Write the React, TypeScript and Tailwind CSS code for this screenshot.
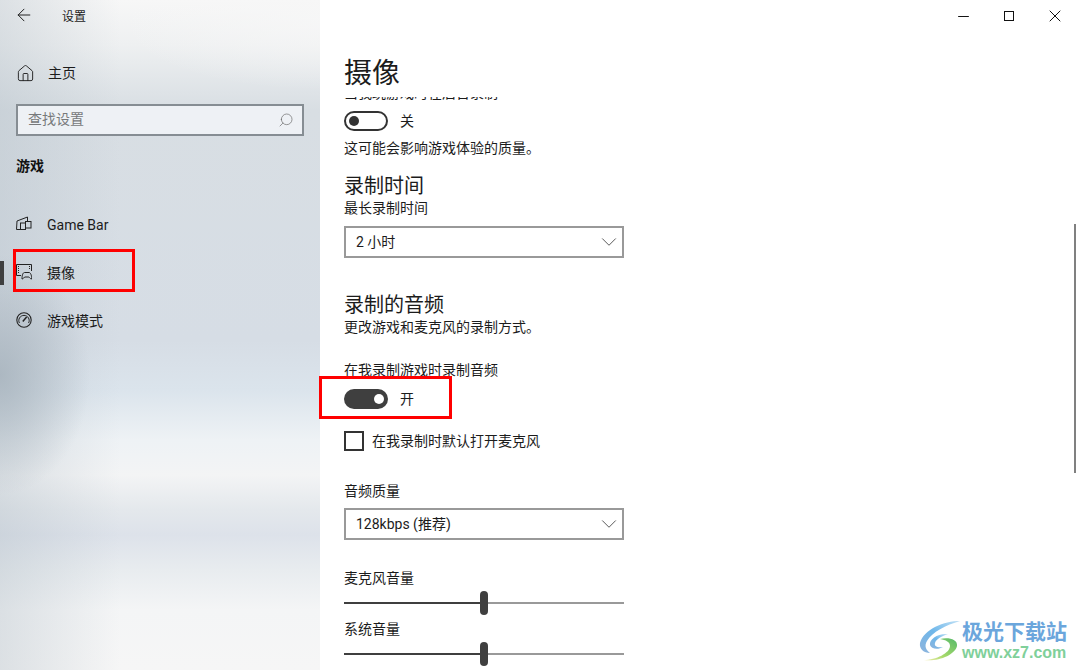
import { ArrowLeft, ChevronDown, Home, Minus, Search, X } from "lucide-react";

const font = "font-['Roboto','Noto_Sans_CJK_SC',sans-serif]";

function GameBarIcon() {
  return (
    <svg width="16" height="16" viewBox="0 0 16 16" fill="none" stroke="#222" strokeWidth="1">
      <path d="M4 13.5 H.5 L1 5 L11.5 1 V5" />
      <rect x="4.5" y="7" width="5" height="6.5" />
      <rect x="9.5" y="5.5" width="5.5" height="6.5" />
    </svg>
  );
}

function CaptureIcon() {
  return (
    <svg width="16" height="17" viewBox="0 0 16 17" fill="none" stroke="#222" strokeWidth="1">
      <path d="M5 12.5 H.5 V1.5 H15.5 V8" />
      <path d="M2.5 3 V11 M13.5 3 V7" strokeDasharray="1 1" />
      <path d="M6 16 C6 12 7 9.5 8.5 9.5 H13 C14.5 9.5 15.7 12 15.7 16 C14 16 13.5 14 12.5 14 H9 C8 14 7.5 16 6 16 Z" />
    </svg>
  );
}

function GameModeIcon() {
  return (
    <svg width="16" height="16" viewBox="0 0 16 16" fill="none" stroke="#222">
      <circle cx="8" cy="8" r="7.2" strokeWidth="1.1" />
      <path d="M3.4 11 A5.2 5.2 0 1 1 12.6 11" strokeWidth="1" />
      <path d="M6.8 9.6 L10.6 5" strokeWidth="1.5" />
    </svg>
  );
}

function NavItem({ icon, label, active }: { icon: React.ReactNode; label: string; active?: boolean }) {
  return (
    <div className="relative flex h-12 items-center pl-4">
      {active && <div className="absolute left-0 top-3 h-6 w-1 bg-[#3f3f3f]" />}
      <span className="mb-[3px] flex w-[31px] shrink-0">{icon}</span>
      <span className="text-sm text-[#1c1c1c]">{label}</span>
    </div>
  );
}

function Select({ value }: { value: string }) {
  return (
    <div className="flex h-8 w-[280px] items-center justify-between border-2 border-[#999] pl-2.5 text-sm text-[#1c1c1c]">
      <span>{value}</span>
      <ChevronDown size={26} strokeWidth={0.9} color="#555" />
    </div>
  );
}

function Slider() {
  return (
    <div className="relative flex h-6 w-[280px] items-center">
      <div className="h-0.5 w-[140px] bg-[#3f3f3f]" />
      <div className="h-0.5 flex-1 bg-[#999]" />
      <div className="absolute left-[136px] top-0 h-6 w-2 rounded-full bg-[#3f3f3f]" />
    </div>
  );
}

function Logo() {
  return (
    <div className="absolute bottom-px right-0 flex h-[56px] w-[162px] items-center">
      <svg width="46" height="48" viewBox="0 0 46 48" fill="none" className="shrink-0">
        <defs>
          <linearGradient id="swirlBlue" x1="1" y1="0" x2="0" y2="1">
            <stop offset="0" stopColor="#bfe0f5" />
            <stop offset="0.5" stopColor="#6fb7ea" />
            <stop offset="1" stopColor="#8fb4dc" />
          </linearGradient>
          <linearGradient id="swirlGreen" x1="1" y1="0" x2="0" y2="1">
            <stop offset="0" stopColor="#55b96a" />
            <stop offset="0.6" stopColor="#a5d96a" />
            <stop offset="1" stopColor="#f3ecaa" />
          </linearGradient>
        </defs>
        <path d="M44 4 C28 4 8 12 4 26 C3 32 8 36 14 36 C10 33 8 29 11 24 C16 15 30 8 44 4Z" fill="url(#swirlBlue)" />
        <path d="M32 17 C22 16 13 22 14 28 C15 32 22 33 27 30 C21 31 18 29 19 26 C20 22 26 19 32 17Z" fill="url(#swirlBlue)" />
        <path d="M24 22 C32 20 42 22 41 29 C39 38 22 45 8 43 C20 43 34 36 34 29 C34 25 30 23 24 22Z" fill="url(#swirlGreen)" />
      </svg>
      <div className="flex flex-col">
        <span className="text-[21px] leading-[24px] font-bold text-[#6ba6dc]">极光下载站</span>
        <span className="font-['Liberation_Sans',sans-serif] text-[16px] leading-[18px] font-bold text-[#7fd09a]">www.xz7.com</span>
      </div>
    </div>
  );
}

export default function App() {
  return (
    <div className={`relative flex h-[670px] w-[1078px] overflow-hidden bg-white ${font}`}>
      <aside className="h-full w-[320px] shrink-0 bg-[radial-gradient(ellipse_200px_70px_at_320px_20px,#f7f7f7cc,#f7f7f700),radial-gradient(ellipse_90px_120px_at_0px_375px,#a5b1bbcc,#a5b1bb00),linear-gradient(90deg,#b4bfc866_0px,#b4bfc800_120px),linear-gradient(180deg,#f7f7f7_0px,#eef0f1_45px,#d8dee3_110px,#d6dde5_340px,#dbe4ec_390px,#eef2f5_440px,#f3f4f5_475px,#e4e8ec_510px,#dde2ea_535px,#e8ecef_570px,#f4f5f6_610px,#f6f6f6_670px)]">
        <div className="flex h-[34px] items-center pl-3.5">
          <ArrowLeft size={20} strokeWidth={1.2} color="#222" className="mb-1" />
          <span className="ml-[28px] text-xs text-[#1c1c1c]">设置</span>
        </div>
        <div className="mt-[15px] flex h-12 items-center pl-4">
          <Home size={19} strokeWidth={1.2} color="#222" />
          <span className="ml-[13px] text-sm text-[#1c1c1c]">主页</span>
        </div>
        <div className="mx-4 mt-[7px] flex h-8 items-center justify-between border-2 border-[#868d93] bg-[#eef1f5] pl-2.5 pr-2">
          <span className="pb-0.5 text-sm text-[#77797b]">查找设置</span>
          <Search size={16} strokeWidth={1} color="#666" className="-scale-x-100" />
        </div>
        <div className="mt-[20px] pl-4 text-sm font-bold text-[#111]">游戏</div>
        <div className="mt-[25px]">
          <NavItem icon={<GameBarIcon />} label="Game Bar" />
          <NavItem icon={<CaptureIcon />} label="摄像" active />
          <NavItem icon={<GameModeIcon />} label="游戏模式" />
        </div>
      </aside>

      <main className="flex h-full flex-1 flex-col overflow-hidden text-[#1c1c1c]">
        <header className="flex h-[37px] shrink-0 justify-end">
          <div className="flex h-[32px] items-center text-[#111]">
            <span className="flex w-[46px] justify-center"><Minus size={17} strokeWidth={1.4} /></span>
            <span className="flex w-[46px] justify-center"><span className="h-2.5 w-2.5 border border-[#111]" /></span>
            <span className="flex w-[46px] justify-center"><X size={20} strokeWidth={1.2} /></span>
          </div>
        </header>
        <div className="flex h-[60px] shrink-0 items-start pl-6 text-[28px] leading-[73px]">摄像</div>
        <div className="relative flex-1 overflow-hidden pl-6">
          <div className="-mt-[14px] flex flex-col items-start text-sm">
            <p className="leading-5">当我玩游戏时在后台录制</p>
            <div className="mt-[6px] flex h-6 items-center gap-3">
              <div className="flex h-5 w-11 items-center rounded-full border-2 border-[#333] pl-[3px]">
                <div className="h-2.5 w-2.5 rounded-full bg-[#333]" />
              </div>
              <span>关</span>
            </div>
            <p className="mt-[5px] leading-5">这可能会影响游戏体验的质量。</p>
            <h2 className="mt-[15px] text-xl leading-[26px]">录制时间</h2>
            <p className="-mt-px leading-5">最长录制时间</p>
            <div className="mt-2"><Select value="2 小时" /></div>
            <h2 className="mt-[34px] text-xl leading-[26px]">录制的音频</h2>
            <p className="-mt-px leading-5">更改游戏和麦克风的录制方式。</p>
            <p className="mt-[23px] leading-5">在我录制游戏时录制音频</p>
            <div className="mt-[7px] flex h-6 items-center gap-3">
              <div className="flex h-5 w-11 items-center justify-end rounded-full bg-[#3f3f3f] pr-1">
                <div className="h-2.5 w-2.5 rounded-full bg-white" />
              </div>
              <span>开</span>
            </div>
            <div className="mt-5 flex items-center gap-2">
              <div className="h-5 w-5 border-2 border-[#333]" />
              <span>在我录制时默认打开麦克风</span>
            </div>
            <p className="mt-[30px] leading-5">音频质量</p>
            <div className="mt-[7px]"><Select value="128kbps (推荐)" /></div>
            <p className="mt-7 leading-5">麦克风音量</p>
            <div className="mt-[3px]"><Slider /></div>
            <p className="mt-1 leading-5">系统音量</p>
            <div className="mt-[3px]"><Slider /></div>
          </div>
          <div className="absolute right-[2px] top-[127px] h-[249px] w-0.5 bg-[#808080]" />
        </div>
      </main>

      <div className="absolute left-[13px] top-[249px] h-[43px] w-[122px] border-[3px] border-[#f00]" />
      <div className="absolute left-[319px] top-[376px] h-[43px] w-[133px] border-[3px] border-[#f00]" />
      <Logo />
    </div>
  );
}
